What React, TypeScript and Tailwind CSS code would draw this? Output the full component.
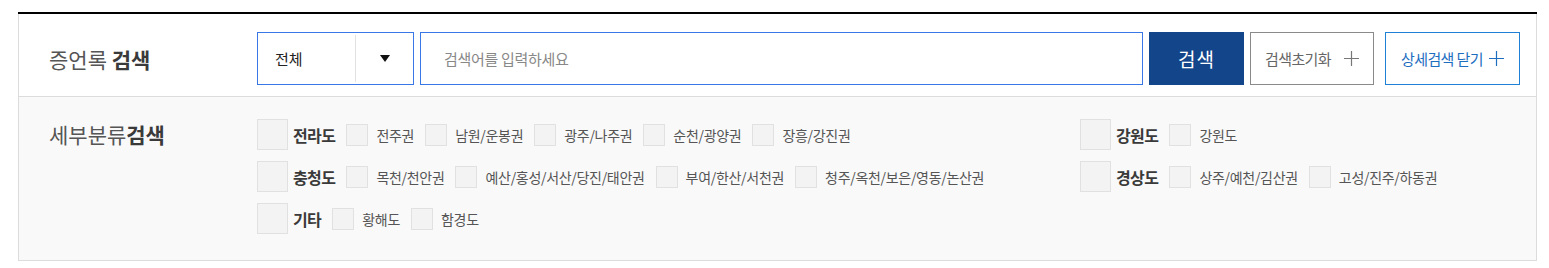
import React from "react";

// ─── Data ──────────────────────────────────────────────────────

interface RegionGroup {
  name: string;
  items: string[];
}

const leftGroups: RegionGroup[] = [
  { name: "전라도", items: ["전주권", "남원/운봉권", "광주/나주권", "순천/광양권", "장흥/강진권"] },
  { name: "충청도", items: ["목천/천안권", "예산/홍성/서산/당진/태안권", "부여/한산/서천권", "청주/옥천/보은/영동/논산권"] },
  { name: "기타", items: ["황해도", "함경도"] },
];

const rightGroups: RegionGroup[] = [
  { name: "강원도", items: ["강원도"] },
  { name: "경상도", items: ["상주/예천/김산권", "고성/진주/하동권"] },
];

const FONT = "font-['Noto_Sans_CJK_KR','Noto_Sans',sans-serif]";

function Group({ group }: { group: RegionGroup }) {
  return (
    <div className="flex items-center h-[31px]">
      <span className="w-[31px] h-[31px] border border-[#e1e1e1] bg-[#f3f3f3] shrink-0" />
      <span className="ml-[5px] text-[16px] leading-none font-bold text-[#3a3a3a] tracking-[-0.6px]">{group.name}</span>
      {group.items.map((item) => (
        <label key={item} className="flex items-center ml-[11px]">
          <span className="w-[22px] h-[22px] border border-[#e1e1e1] bg-[#f3f3f3] shrink-0" />
          <span className="ml-[8px] text-[14px] leading-none text-[#555] tracking-[-0.3px] whitespace-nowrap">{item}</span>
        </label>
      ))}
    </div>
  );
}

export default function App() {
  return (
    <div className={`bg-white w-[1549px] h-[268px] pt-[12px] ${FONT}`}>
      <div className="ml-[18px] w-[1519px] border-t-2 border-black">
        {/* Top search bar */}
        <div className="flex items-center h-[83px] pt-[18px] pb-[12px] pl-[30px] border-x border-b border-[#dcdcdc]">
          <h2 className="w-[208px] pt-[2px] text-[21px] leading-none text-[#555]">
            증언록 <b className="text-[#3a3a3a]">검색</b>
          </h2>
          <div className="flex items-center w-[157px] h-[53px] border border-[#3a77e6] bg-white">
            <span className="flex-1 pl-[17px] text-[15px] leading-none text-[#222]">전체</span>
            <span className="w-[58px] h-[47px] border-l border-[#e2e2e2] flex items-center justify-center">
              <svg width="10" height="7" viewBox="0 0 10 7">
                <path d="M0 0 L10 0 L5 7 Z" fill="#111" />
              </svg>
            </span>
          </div>
          <div className="ml-[6px] w-[723px] h-[53px] border border-[#3a77e6] flex items-center pl-[23px]">
            <span className="text-[15px] leading-none text-[#888] tracking-[-0.3px]">검색어를 입력하세요</span>
          </div>
          <button className="ml-[6px] w-[95px] h-[53px] bg-[#12458a] text-white text-[19px] leading-none tracking-[1px]">
            검색
          </button>
          <button className="ml-[6px] w-[124px] h-[53px] border border-[#8a8a8a] flex items-center justify-center gap-[13px] text-[15px] leading-none text-[#666] tracking-[-0.6px]">
            검색초기화
            <svg width="15" height="15" viewBox="0 0 15 15">
              <path d="M7.5 0 V15 M0 7.5 H15" stroke="#777" strokeWidth="1.2" />
            </svg>
          </button>
          <button className="ml-[11px] w-[135px] h-[53px] border border-[#1f80d6] flex items-center justify-center gap-[6px] text-[15px] leading-none text-[#1e6ec0] tracking-[-0.6px]">
            상세검색 닫기
            <svg width="15" height="15" viewBox="0 0 15 15">
              <path d="M7.5 0 V15 M0 7.5 H15" stroke="#1e6ec0" strokeWidth="1.2" />
            </svg>
          </button>
        </div>

        {/* Detail category search */}
        <div className="flex pl-[30px] pt-[22px] pb-[26px] bg-[#f9f9f9] border-x border-b border-[#dcdcdc]">
          <h3 className="w-[208px] h-[31px] flex items-center text-[21px] leading-none text-[#555]">
            세부분류<b className="text-[#3a3a3a]">검색</b>
          </h3>
          <div className="grid grid-cols-[823px_1fr] gap-y-[11px]">
            {leftGroups.map((g, i) => (
              <React.Fragment key={g.name}>
                <Group group={g} />
                {rightGroups[i] ? <Group group={rightGroups[i]} /> : <div />}
              </React.Fragment>
            ))}
          </div>
        </div>
      </div>
    </div>
  );
}
